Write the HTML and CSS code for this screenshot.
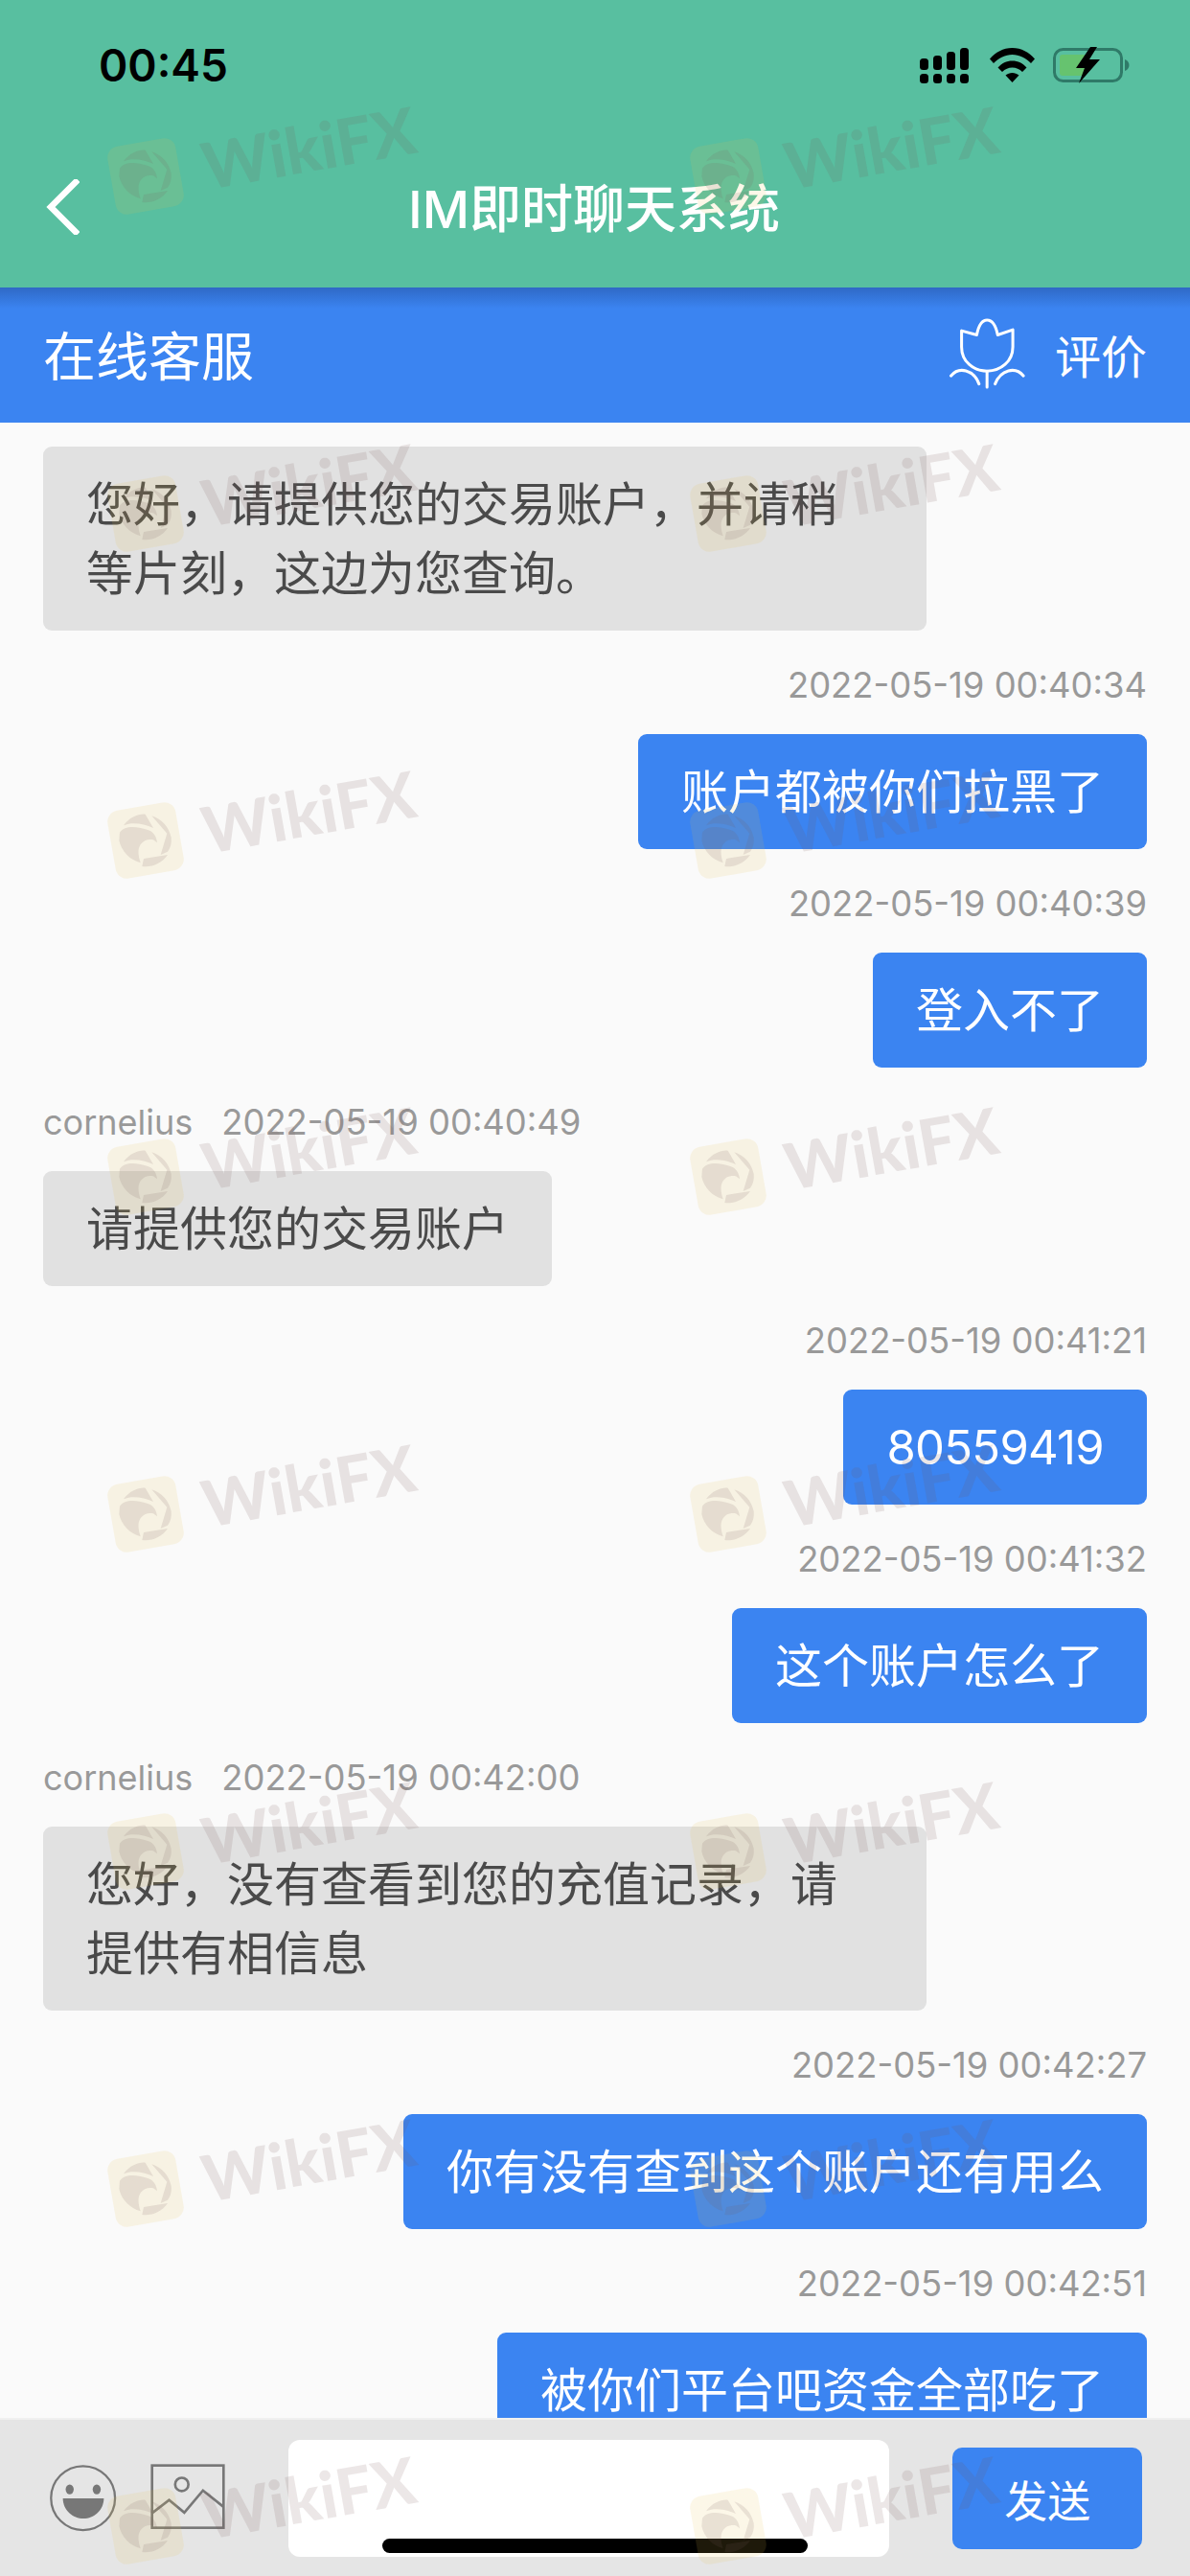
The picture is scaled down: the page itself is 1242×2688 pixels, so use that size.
FILE: index.html
```html
<!DOCTYPE html>
<html lang="zh">
<head>
<meta charset="utf-8">
<title>IM即时聊天系统</title>
<link rel="stylesheet" href="styles.css">
</head>
<body>
<svg class="defs" width="0" height="0" aria-hidden="true">
  <symbol id="wikifx-logo" viewBox="25 171 312 312">
    <rect x="73" y="219" width="216" height="216" rx="36" fill="#e9c04b" fill-opacity=".13" transform="rotate(-10 181 327)"/>
    <g fill="#785a5a" fill-opacity=".14">
      <path d="M100 302C118 276 160 285 190 295C205 300 215 315 217 334L205 325C190 322 175 325 165 340C155 355 158 375 165 397C130 387 105 360 98 327Z"/>
      <path d="M112 280C130 255 158 243 180 245L205 288C175 275 140 268 112 280Z"/>
      <path d="M200 250C232 260 254 285 261 318C263 335 259 350 250 362L228 372L248 305Z"/>
      <path d="M175 384L250 372C232 398 200 412 170 408Z"/>
    </g>
  </symbol>
</svg>
<div class="app">
  <header class="top">
    <div class="status">
      <span class="clock">00:45</span>
      <div class="status-icons">
        <svg class="ic-signal" width="51" height="37" viewBox="0 0 51 37"><g fill="#000"><rect x="0" y="11" width="9" height="12" rx="3.5"/><rect x="14" y="8" width="9" height="15" rx="3.5"/><rect x="28" y="4" width="9" height="19" rx="3.5"/><rect x="42" y="0" width="9" height="23" rx="3.5"/><rect x="0" y="27" width="9" height="10" rx="3.5"/><rect x="14" y="27" width="9" height="10" rx="3.5"/><rect x="28" y="27" width="9" height="10" rx="3.5"/><rect x="42" y="27" width="9" height="10" rx="3.5"/></g></svg>
        <svg class="ic-wifi" width="47" height="36" viewBox="0 0 47 36"><g fill="#000"><path d="M0 11.500C6 4.500 14 0 23.500 0S41 4.500 47 11.500L43 16C37.500 10.500 31 7 23.500 7S9.500 10.500 4 16Z"/><path d="M8.500 20.500C12.500 16 17.500 13.500 23.500 13.500S34.500 16 38.500 20.500L34 25C31 22 27.500 20.500 23.500 20.500S16 22 13 25Z"/><path d="M16.500 28.500C18.500 27 21 26 23.500 26S28.500 27 30.500 28.500L23.500 36Z"/></g></svg>
        <svg class="ic-batt" width="80" height="40" viewBox="0 0 80 40"><rect x="1.500" y="3.500" width="70" height="33" rx="9" fill="none" stroke="#2f7a68" stroke-width="3"/><path d="M75 14c3 1 4.500 3.500 4.500 6s-1.500 5-4.500 6Z" fill="#2f7a68"/><rect x="7" y="9" width="28" height="22" rx="3" fill="#66c36f"/><path d="M39 1 L24 23 H33 L27 39 L49 14 H38 L46 1 Z" fill="#000"/></svg>
      </div>
    </div>
    <div class="nav">
      <svg class="ic-back" width="35" height="58" viewBox="0 0 35 58"><path d="M31 3 L5 29 L31 55" fill="none" stroke="#fff" stroke-width="6.500" stroke-linecap="square"/></svg>
      <h1 class="title">IM即时聊天系统</h1>
    </div>
  </header>

  <div class="service">
    <span class="service-name">在线客服</span>
    <div class="rate">
      <svg class="ic-tulip" width="81" height="74" viewBox="88 76 240 220"><g fill="none" stroke="#fff" stroke-width="9" stroke-linecap="round" stroke-linejoin="round"><path d="M128 115L175 128C180 103 190 82 207 82C224 82 235 103 240 128L287 112V165C287 210 250 240 207 240C164 240 128 210 128 165Z"/><path d="M207 240V290"/><path d="M95 255C120 225 165 235 182 280"/><path d="M320 255C295 225 250 235 232 280"/></g></svg>
      <span class="rate-label">评价</span>
    </div>
  </div>

  <main class="chat">
    <div class="msg left"><div class="bubble wide">您好，请提供您的交易账户，并请稍<br>等片刻，这边为您查询。</div></div>
    <div class="msg right"><div class="meta">2022-05-19 00:40:34</div><div class="bubble">账户都被你们拉黑了</div></div>
    <div class="msg right"><div class="meta">2022-05-19 00:40:39</div><div class="bubble">登入不了</div></div>
    <div class="msg left"><div class="meta"><span class="who">cornelius</span>2022-05-19 00:40:49</div><div class="bubble">请提供您的交易账户</div></div>
    <div class="msg right"><div class="meta">2022-05-19 00:41:21</div><div class="bubble num">80559419</div></div>
    <div class="msg right"><div class="meta">2022-05-19 00:41:32</div><div class="bubble">这个账户怎么了</div></div>
    <div class="msg left"><div class="meta"><span class="who">cornelius</span>2022-05-19 00:42:00</div><div class="bubble wide">您好，没有查看到您的充值记录，请<br>提供有相信息</div></div>
    <div class="msg right"><div class="meta">2022-05-19 00:42:27</div><div class="bubble">你有没有查到这个账户还有用么</div></div>
    <div class="msg right"><div class="meta">2022-05-19 00:42:51</div><div class="bubble">被你们平台吧资金全部吃了</div></div>
  </main>

  <footer class="composer">
    <svg class="ic-emoji" width="72" height="72" viewBox="60 90 222 222"><circle cx="170" cy="200" r="103" fill="none" stroke="#777" stroke-width="7"/><ellipse cx="127" cy="172" rx="13" ry="16" fill="#777"/><ellipse cx="214" cy="172" rx="13" ry="16" fill="#777"/><path d="M105 201H237C236 240 205 266 171 266C137 266 106 240 105 201Z" fill="#777"/></svg>
    <svg class="ic-image" width="78" height="68" viewBox="378 96 234 206"><g fill="none" stroke="#777" stroke-width="8"><rect x="382" y="101" width="226" height="197"/><circle cx="476" cy="161" r="21"/><path d="M384 250L436 210L484 250L543 180L608 232"/></g></svg>
    <div class="field"></div>
    <button class="send">发送</button>
  </footer>

  <div class="home-bar"></div>

  <div class="marks" aria-hidden="true">
    <div class="mark"><svg class="mark-logo"><use href="#wikifx-logo"/></svg><span class="mark-text">WikiFX</span></div>
    <div class="mark"><svg class="mark-logo"><use href="#wikifx-logo"/></svg><span class="mark-text">WikiFX</span></div>
    <div class="mark"><svg class="mark-logo"><use href="#wikifx-logo"/></svg><span class="mark-text">WikiFX</span></div>
    <div class="mark"><svg class="mark-logo"><use href="#wikifx-logo"/></svg><span class="mark-text">WikiFX</span></div>
    <div class="mark"><svg class="mark-logo"><use href="#wikifx-logo"/></svg><span class="mark-text">WikiFX</span></div>
    <div class="mark"><svg class="mark-logo"><use href="#wikifx-logo"/></svg><span class="mark-text">WikiFX</span></div>
    <div class="mark"><svg class="mark-logo"><use href="#wikifx-logo"/></svg><span class="mark-text">WikiFX</span></div>
    <div class="mark"><svg class="mark-logo"><use href="#wikifx-logo"/></svg><span class="mark-text">WikiFX</span></div>
    <div class="mark"><svg class="mark-logo"><use href="#wikifx-logo"/></svg><span class="mark-text">WikiFX</span></div>
    <div class="mark"><svg class="mark-logo"><use href="#wikifx-logo"/></svg><span class="mark-text">WikiFX</span></div>
    <div class="mark"><svg class="mark-logo"><use href="#wikifx-logo"/></svg><span class="mark-text">WikiFX</span></div>
    <div class="mark"><svg class="mark-logo"><use href="#wikifx-logo"/></svg><span class="mark-text">WikiFX</span></div>
    <div class="mark"><svg class="mark-logo"><use href="#wikifx-logo"/></svg><span class="mark-text">WikiFX</span></div>
    <div class="mark"><svg class="mark-logo"><use href="#wikifx-logo"/></svg><span class="mark-text">WikiFX</span></div>
    <div class="mark"><svg class="mark-logo"><use href="#wikifx-logo"/></svg><span class="mark-text">WikiFX</span></div>
    <div class="mark"><svg class="mark-logo"><use href="#wikifx-logo"/></svg><span class="mark-text">WikiFX</span></div>
  </div>
</div>
</body>
</html>
```

FILE: styles.css
```css
* { box-sizing: border-box; margin: 0; padding: 0; }
html, body { width: 1242px; height: 2688px; overflow: hidden; }
body { font-family: Inter, "Noto Sans CJK SC", sans-serif; background: #fafafa; }
.defs { position: absolute; }
.app { position: relative; width: 1242px; height: 2688px; display: flex; flex-direction: column; overflow: hidden; }

.top { height: 300px; background: #58bfa0; display: flex; flex-direction: column; }
.status { height: 132px; display: flex; align-items: center; justify-content: space-between; padding: 4px 63px 0 103px; }
.clock { font-size: 46px; font-weight: 600; color: #000; }
.status-icons { display: flex; align-items: center; }
.ic-wifi { margin-left: 22px; }
.ic-batt { margin-left: 19px; }
.nav { position: relative; height: 168px; display: flex; align-items: center; justify-content: center; }
.ic-back { position: absolute; left: 48px; top: 55px; }
.title { font-size: 54px; font-weight: 500; color: #fff; margin: 0 0 4px -2px; }

.service { height: 141px; background: linear-gradient(#2f69c6, #3b84f1 22px); display: flex; align-items: center; justify-content: space-between; padding: 0 45px 4px; color: #fff; }
.service-name { font-size: 55px; margin-bottom: 2px; }
.rate { display: flex; align-items: center; gap: 30px; }
.ic-tulip { display: block; }
.rate-label { font-size: 48px; }

.chat { flex: 1; min-height: 0; overflow: hidden; background: #fafafa; padding: 25px 45px 0; display: flex; flex-direction: column; }
.msg { display: flex; flex-direction: column; margin-top: 34px; }
.msg:first-child { margin-top: 0; }
.msg.left { align-items: flex-start; }
.msg.right { align-items: flex-end; }
.meta { font-size: 36.400px; line-height: 46px; color: #999; margin-bottom: 28px; }
.who { font-size: 36px; margin-right: 30px; }
.bubble { flex: none; font-size: 49px; line-height: 72px; padding: 25px 45px 23px; border-radius: 9px; white-space: nowrap; }
.left .bubble { background: #e1e1e1; color: #4a4a4a; }
.right .bubble { background: #3b84f1; color: #fff; }
.bubble.wide { width: 922px; }
.bubble.num { letter-spacing: -.7px; }

.composer { height: 165px; flex: none; background: #e5e5e5; border-top: 2px solid #f0f0f0; display: flex; align-items: flex-start; padding: 21px 50px 0 51px; }
.ic-emoji { margin-top: 25px; flex: none; }
.ic-image { margin-top: 25px; margin-left: 34px; flex: none; }
.field { width: 629px; height: 122px; background: #fff; border-radius: 12px; margin-left: 66px; }
.send { width: 198px; height: 106px; margin-left: 66px; margin-top: 8px; border: 0; border-radius: 10px; background: #3b84f1; color: #fff; font: 45px Inter, "Noto Sans CJK SC", sans-serif; }

.home-bar { position: absolute; left: 399px; top: 2649px; width: 444px; height: 15px; border-radius: 8px; background: #000; }

.marks { position: absolute; inset: 0; pointer-events: none; display: grid; grid-template-columns: repeat(2, 608px); grid-template-rows: 352px 341px 351px 352px 352px 352px 352px 352px; padding: 132px 0 0 100px; }
.mark { position: relative; }
.mark-logo { position: absolute; left: 0; top: 0; width: 104px; height: 104px; }
.mark-text { position: absolute; left: 222px; top: 21px; font-family: Lato, sans-serif; font-weight: 900; font-size: 67px; line-height: 80px; color: rgba(121, 86, 86, .14); transform: translate(-50%, -50%) rotate(-10deg); }
```
